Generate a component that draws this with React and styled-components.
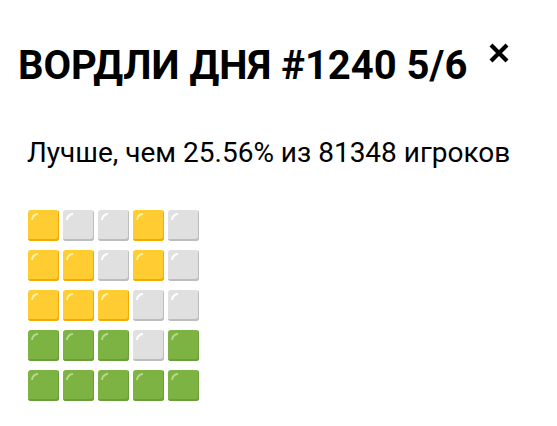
import React from 'react'
import styled, {createGlobalStyle} from 'styled-components'

const GlobalStyle = createGlobalStyle`
  html, body {
    margin: 0;
    padding: 0;
    background: #fff;
  }
  body {
    font-family: Roboto, "Noto Sans", Arial, sans-serif;
    color: #000;
  }
`

const Modal = styled.div`
  width: 557px;
  height: 426px;
  box-sizing: border-box;
  padding: 38px 0 0 18px;
`

const Header = styled.div`
  display: flex;
  align-items: flex-start;
`

const Title = styled.h1`
  margin: 0;
  font-size: 40px;
  font-weight: 700;
  line-height: 56px;
  white-space: nowrap;
`

const Close = styled.button`
  border: 0;
  background: none;
  padding: 0;
  margin: 4px 0 0 21px;
  width: 22px;
  height: 22px;
  cursor: pointer;
`

const Subtitle = styled.p`
  margin: 43px 0 0 9px;
  font-size: 28px;
  line-height: 32px;
  white-space: nowrap;
`

const Grid = styled.div`
  display: grid;
  grid-template-columns: repeat(5, 31px);
  grid-auto-rows: 31px;
  column-gap: 4px;
  row-gap: 9px;
  margin: 41px 0 0 10px;
`

const palette = {
  y: {face: '#ffcc32', edge: '#f4aa00', shine: '#fff3a8'},
  g: {face: '#7cb342', edge: '#689f38', shine: '#b8d98f'},
  w: {face: '#e0e0e0', edge: '#bdbdbd', shine: '#ffffff'},
}

const Tile = styled.div`
  position: relative;
  border-radius: 3px;
  background: ${p => palette[p.$c].face};
  box-shadow: inset -1px -2px 0 ${p => palette[p.$c].edge};

  &::before {
    content: '';
    position: absolute;
    left: 3px;
    top: 3px;
    width: 7px;
    height: 7px;
    border-top: 2px solid ${p => palette[p.$c].shine};
    border-left: 2px solid ${p => palette[p.$c].shine};
    border-top-left-radius: 7px;
    box-sizing: border-box;
  }
`

const rows = ['ywwyw', 'yywyw', 'yyyww', 'gggwg', 'ggggg']

export default function App() {
  return (
    <>
      <GlobalStyle />
      <Modal>
        <Header>
          <Title>ВОРДЛИ ДНЯ #1240 5/6</Title>
          <Close aria-label="close">
            <svg width="22" height="22" viewBox="0 0 22 22">
              <path d="M3 3 L19 19 M19 3 L3 19" stroke="#000" strokeWidth="4.2" />
            </svg>
          </Close>
        </Header>
        <Subtitle>Лучше, чем 25.56% из 81348 игроков</Subtitle>
        <Grid>
          {rows.map((r, i) =>
            r.split('').map((c, j) => <Tile key={i + '-' + j} $c={c} />)
          )}
        </Grid>
      </Modal>
    </>
  )
}
